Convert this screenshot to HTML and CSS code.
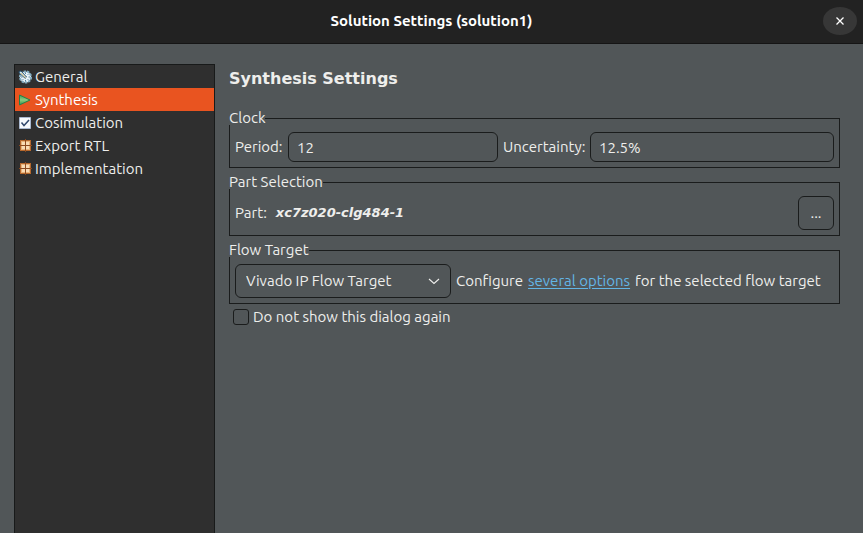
FILE: index.html
```html
<!DOCTYPE html>
<html lang="en">
<head>
<meta charset="utf-8">
<title>Solution Settings (solution1)</title>
<link rel="stylesheet" href="styles.css">
</head>
<body>
<header class="titlebar">
  <h1 class="titlebar-title">Solution Settings (solution1)</h1>
  <button class="close" type="button" aria-label="Close">
    <svg width="10" height="10" viewBox="0 0 10 10" aria-hidden="true"><path d="M1.5 1.5l7 7M8.5 1.5l-7 7" stroke="#fff" stroke-width="1.3"/></svg>
  </button>
</header>
<main class="dialog">
  <nav class="sidebar">
    <a class="item" href="#general">
      <svg class="icon" viewBox="0 0 14 14" aria-hidden="true">
        <circle cx="7.5" cy="7" r="5.6" fill="#e9f3f8" stroke="#84adc2" stroke-width="2" stroke-dasharray="2.4 1"/>
        <path d="M7.5 2.5V4M12 7h-1.5M7.5 11.5V10M3 7h1.5M10.7 3.8l-1 1M10.7 10.2l-1-1M4.3 10.2l1-1" stroke="#527f9c"/>
        <path d="M1 1.5L3 1l5.5 6-1.3 1.3L1.2 3z" fill="#d9edf4" stroke="#244b68"/>
        <path d="M3 3l4.5 4.8" stroke="#efd58d"/>
      </svg>General</a>
    <a class="item selected" href="#synthesis" aria-current="page">
      <svg class="icon" viewBox="0 0 14 14" aria-hidden="true">
        <defs><linearGradient id="play" x2="0" y2="1"><stop stop-color="#3f9c55"/><stop offset=".5" stop-color="#8ccb80"/><stop offset="1" stop-color="#2c8f48"/></linearGradient></defs>
        <path d="M1.5 2v10L12 7z" fill="url(#play)" stroke="#23804a"/>
      </svg>Synthesis</a>
    <a class="item" href="#cosimulation">
      <svg class="icon" viewBox="0 0 14 14" aria-hidden="true">
        <path d="M1.500 1.500h11v11h-11z" fill="#f6f9fd" stroke="#a9b8cf"/>
        <path d="M3.500 6.500L6 9.500 11 4" fill="none" stroke="#31486d" stroke-width="1.500"/>
      </svg>Cosimulation</a>
    <a class="item" href="#export">
      <svg class="icon" viewBox="0 0 14 14" aria-hidden="true">
        <path d="M2 1h11v11H2z" fill="#b5682d"/><path d="M7.5 0v13M1 6.500h13" stroke="#8b4a20"/>
        <path d="M3 2h4v4H3zM8 2h4v4H8zM3 7h4v4H3zM8 7h4v4H8z" fill="#e8b47c"/>
        <path d="M4 3h3v3H4zM8 3h3v3H8zM4 7h3v3H4zM8 7h3v3H8z" fill="#f8dbb5"/>
      </svg>Export RTL</a>
    <a class="item" href="#implementation">
      <svg class="icon" viewBox="0 0 14 14" aria-hidden="true">
        <path d="M2 1h11v11H2z" fill="#b5682d"/><path d="M7.5 0v13M1 6.500h13" stroke="#8b4a20"/>
        <path d="M3 2h4v4H3zM8 2h4v4H8zM3 7h4v4H3zM8 7h4v4H8z" fill="#e8b47c"/>
        <path d="M4 3h3v3H4zM8 3h3v3H8zM4 7h3v3H4zM8 7h3v3H8z" fill="#f8dbb5"/>
      </svg>Implementation</a>
  </nav>
  <form class="settings">
    <h2 class="heading">Synthesis Settings</h2>
    <fieldset class="group">
      <legend>Clock</legend>
      <div class="clock-row">
        <label for="period">Period:</label>
        <input class="field" id="period" type="text" value="12">
        <label for="uncertainty">Uncertainty:</label>
        <input class="field" id="uncertainty" type="text" value="12.5%">
      </div>
    </fieldset>
    <fieldset class="group">
      <legend>Part Selection</legend>
      <div class="row">
        <span>Part:</span>
        <output class="part">xc7z020-clg484-1</output>
        <button class="browse" type="button" aria-label="Browse parts">...</button>
      </div>
    </fieldset>
    <fieldset class="group">
      <legend>Flow Target</legend>
      <div class="row">
        <select class="target" aria-label="Flow target"><option>Vivado IP Flow Target</option></select>
        <span class="hint"><span>Configure</span> <a class="link" href="#options">several options</a> <span>for the selected flow target</span></span>
      </div>
    </fieldset>
    <label class="check"><input class="box" type="checkbox">Do not show this dialog again</label>
  </form>
</main>
</body>
</html>
```
FILE: styles.css
```css
* { box-sizing: border-box; }

body {
  margin: 0;
  min-height: 100vh;
  display: flex;
  flex-direction: column;
  background: #515658;
  color: #eeeeec;
  font: 15px/20px "Ubuntu", "Noto Sans", sans-serif;
}

input, select, button { font: inherit; color: inherit; }

.titlebar {
  display: grid;
  grid-template-columns: 1fr auto 1fr;
  align-items: center;
  height: 44px;
  padding: 0 6px 2px;
  background: #222222;
  border-bottom: 1px solid #151515;
}

.titlebar-title {
  grid-column: 2;
  margin: 0;
  font-size: 15px;
  line-height: 20px;
  color: #ffffff;
}

.close {
  justify-self: end;
  display: grid;
  place-items: center;
  width: 34px;
  height: 28px;
  padding: 0;
  border: 0;
  border-radius: 50%;
  background: #373737;
}

.dialog {
  flex: 1;
  display: grid;
  grid-template-columns: 201px 1fr;
  gap: 14px;
  padding: 20px 23px 0 14px;
}

.sidebar {
  border: 1px solid #181a1a;
  border-bottom: 0;
  background: #2f2f2f;
}

.item {
  display: flex;
  align-items: center;
  gap: 3px;
  height: 23px;
  padding-left: 3px;
  color: inherit;
  text-decoration: none;
}

.selected {
  background: #e95420;
  color: #ffffff;
}

.icon {
  width: 14px;
  height: 14px;
}

.settings { padding-top: 5px; }

.heading {
  margin: 0 0 22px;
  font: bold 16px/20px "DejaVu Sans", sans-serif;
}

.group {
  min-width: 0;
  margin: 0 0 7px;
  padding: 7px 5px 5px;
  border: 1px solid #1a1c1c;
}

.group legend {
  height: 14px;
  margin-left: -6px;
  padding: 0;
  line-height: 14px;
  background: #515658;
}

.clock-row {
  display: grid;
  grid-template-columns: 48px 210fr 82px 244fr;
  align-items: center;
  gap: 5px;
}

.field {
  min-width: 0;
  height: 30px;
  padding: 0 8px;
  border: 1px solid #1a1c1c;
  border-radius: 6px;
  background: transparent;
}

.row {
  display: flex;
  align-items: center;
  gap: 5px;
}

.part {
  margin-left: 4px;
  font: italic bold 13px/20px "DejaVu Sans", sans-serif;
}

.browse {
  width: 36px;
  height: 34px;
  margin-left: auto;
  padding: 0;
  border: 1px solid #1a1c1c;
  border-radius: 6px;
  background: transparent;
}

.target {
  appearance: none;
  width: 216px;
  height: 34px;
  padding: 0 30px 0 10px;
  border: 1px solid #1a1c1c;
  border-radius: 6px;
  background: url("data:image/svg+xml,%3Csvg xmlns='http://www.w3.org/2000/svg' width='12' height='7'%3E%3Cpath d='M1 1l5 4.5L11 1' fill='none' stroke='%23eeeeec' stroke-width='1.1'/%3E%3C/svg%3E") no-repeat right 10px center;
}

.hint {
  display: flex;
  gap: 5px;
  white-space: nowrap;
}

.link { color: #63b5e5; text-underline-offset: 2px; }

.check {
  display: flex;
  align-items: center;
  gap: 4px;
  width: max-content;
  margin: -4px 0 0 4px;
}

.box {
  appearance: none;
  width: 16px;
  height: 16px;
  margin: 0;
  border: 1px solid #1a1c1c;
  border-radius: 3px;
}

.box:checked { background: #e95420; }
```
